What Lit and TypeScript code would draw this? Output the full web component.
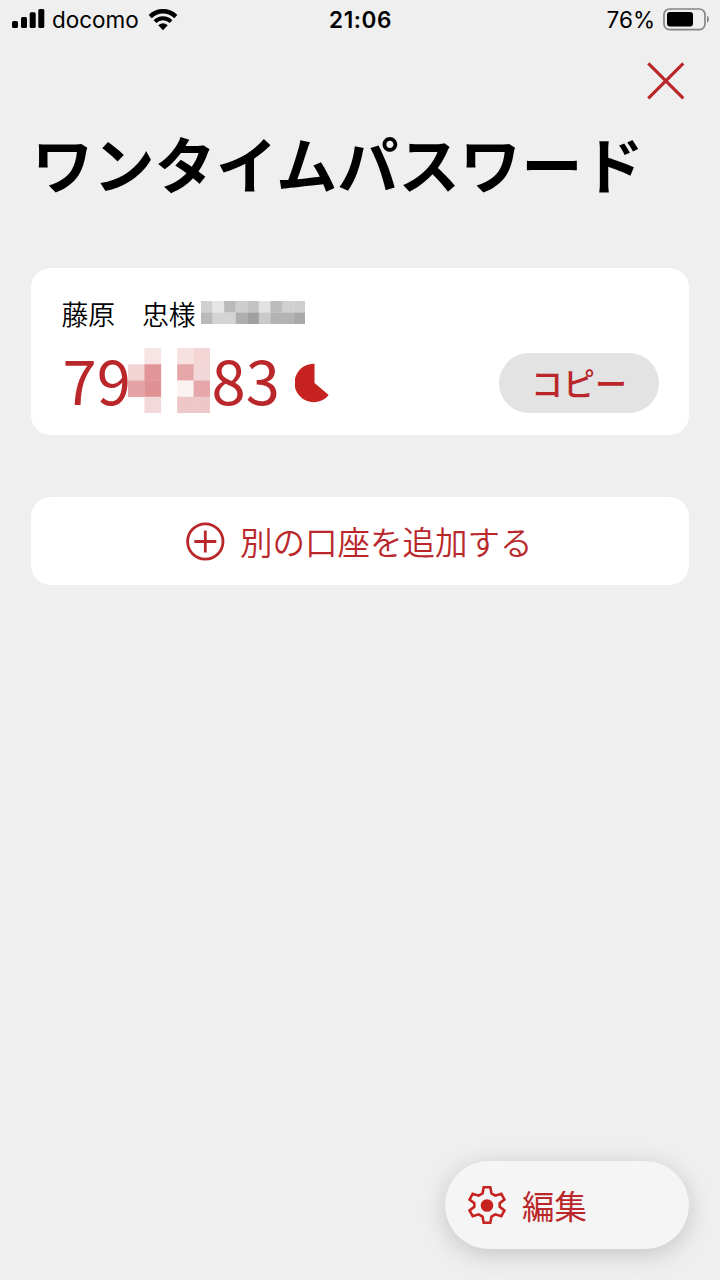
import { LitElement, html, svg, css } from "lit";
import { customElement } from "lit/decorators.js";

const NAME_MASK = [
  ["#d0d0d0", "#e6e6e6", "#bababa", "#cecece", "#c3c3c3", "#e2e2e2", "#bcbcbc", "#cfcfcf", "#cfcfcf"],
  ["#b9b9b9", "#d4d4d4", "#d4d4d4", "#aeaeae", "#a0a0a0", "#cacaca", "#b3b3b3", "#b3b3b3", "#a9a9a9"],
];

const CODE_MASK = [
  ["", "#f7e4e4", "", "#f7e0e0", "#f3d5d6"],
  ["#f3d4d5", "#e29598", "", "#e5a6a8", "#f3d6d7"],
  ["#e4a3a5", "#df9194", "", "#fbf3f1", "#e5a7a9"],
  ["", "#f4d9da", "", "#eec8c9", "#eec8c9"],
];

const cells = (rows: string[][]) =>
  rows.map((row, y) =>
    row.map((fill, x) =>
      fill ? svg`<rect x=${x} y=${y} width="1.02" height="1.02" fill=${fill}></rect>` : null
    )
  );

@customElement("app-root")
export class AppRoot extends LitElement {
  static styles = css`
    :host {
      display: flex;
      flex-direction: column;
      box-sizing: border-box;
      width: 720px;
      height: 1280px;
      overflow: hidden;
      background: #efefef;
      color: #000;
      font-family: "Noto Sans CJK JP", sans-serif;
    }
    * { box-sizing: border-box; }
    svg { display: block; flex: none; }
    button {
      border: 0;
      margin: 0;
      padding: 0;
      background: none;
      color: #b9272b;
      font: inherit;
      white-space: nowrap;
    }
    .status {
      display: grid;
      grid-template-columns: 1fr auto 1fr;
      align-items: center;
      height: 39px;
      padding: 0 10px 0 12px;
      font: 400 22.5px/39px Inter, sans-serif;
    }
    .side { display: flex; align-items: center; }
    .right { justify-content: flex-end; }
    .carrier { margin: 0 9px 0 7px; }
    .clock { font-weight: 600; letter-spacing: 0.6px; padding-right: 1px; }
    .percent { margin-right: 8px; }
    .top { display: flex; justify-content: flex-end; height: 78px; padding: 22px 34px 0 0; }
    .top button { height: 40px; }
    h1 {
      margin: 0;
      padding-left: 32px;
      height: 151.4px;
      font-size: 61.3px;
      line-height: 92px;
      font-weight: 700;
      white-space: nowrap;
    }
    .card {
      margin: 0 31px;
      border-radius: 20px;
      background: #fff;
    }
    .account { height: 167px; padding: 26.6px 30px 0 30.5px; }
    .name { display: flex; align-items: center; height: 38px; font-size: 26.8px; font-weight: 350; white-space: nowrap; }
    .name svg { margin: 0 0 2px 6px; }
    .code { display: flex; align-items: center; height: 68px; margin-top: 16px; color: #b9272b; }
    .digits { width: 67px; padding-left: 1px; font-size: 61.5px; line-height: 60px; height: 68px; font-weight: 400; white-space: nowrap; }
    .code-mask { margin: 0 1px 4px -1px; }
    .copy {
      width: 160px;
      height: 60px;
      margin-left: auto;
      border-radius: 30px;
      background: #e3e3e3;
      padding-bottom: 2px;
      font-size: 32px;
      line-height: 56px;
      font-weight: 500;
    }
    .timer { margin-left: 17px; }
    .add {
      display: flex;
      align-items: center;
      height: 88px;
      margin-top: 61.6px;
      padding-left: 154px;
      font-size: 32.5px;
      line-height: 46px;
      font-weight: 350;
    }
    .add svg { margin-right: 15px; }
    .edit {
      display: flex;
      align-items: center;
      align-self: flex-end;
      width: 244px;
      height: 88px;
      margin: auto 31px 31px 0;
      padding-left: 23px;
      border-radius: 44px;
      background: #f5f5f5;
      box-shadow: 0 5px 24px rgba(0, 0, 0, 0.18);
      font-size: 32.4px;
    }
    .edit svg { margin-right: 16px; }
    .edit span { padding-bottom: 2px; }
  `;

  render() {
    return html`
      <div class="status">
        <div class="side">
          <svg width="33" height="21" viewBox="0 0 33 21">
            <rect x="0" y="12" width="6" height="7" rx="1.5"></rect>
            <rect x="9" y="8" width="6" height="11" rx="1.5"></rect>
            <rect x="17.7" y="3.3" width="6" height="15.7" rx="1.5"></rect>
            <rect x="26.3" y="0" width="6" height="19" rx="1.5"></rect>
          </svg>
          <span class="carrier">docomo</span>
          <svg width="30" height="22" viewBox="0 0 30 22" fill="none" stroke="#000">
            <path d="M2.2 7.6 A18 18 0 0 1 27.8 7.6" stroke-width="4.4"></path>
            <path d="M7 12.7 A11.2 11.2 0 0 1 23 12.7" stroke-width="4"></path>
            <path d="M10.2 16.2 Q15 12.2 19.8 16.2 L15 21.2 Z" fill="#000" stroke="none"></path>
          </svg>
        </div>
        <span class="clock">21:06</span>
        <div class="side right">
          <span class="percent">76%</span>
          <svg width="47" height="23" viewBox="0 0 47 23">
            <rect x="1" y="1" width="41" height="20.6" rx="5.5" fill="none" stroke="#858585" stroke-width="1.7"></rect>
            <rect x="4" y="4" width="26" height="14.6" rx="3"></rect>
            <path d="M44 7.5 Q46 9 46 11.3 T44 15Z" fill="#858585"></path>
          </svg>
        </div>
      </div>
      <div class="top">
        <button aria-label="閉じる">
          <svg width="40" height="40" viewBox="0 0 40 40" stroke="#b9272b" stroke-width="3.2">
            <path d="M2.3 2.3 L37.3 37.3 M37.3 2.3 L2.3 37.3"></path>
          </svg>
        </button>
      </div>
      <h1>ワンタイムパスワード</h1>
      <section class="card account">
        <div class="name">
          藤原　忠様<svg width="104" height="23" viewBox="0 0 9 2" preserveAspectRatio="none">${cells(NAME_MASK)}</svg>
        </div>
        <div class="code">
          <span class="digits">79</span>
          <svg class="code-mask" width="82" height="65" viewBox="0 0 5 4" preserveAspectRatio="none">${cells(CODE_MASK)}</svg>
          <span class="digits">83</span>
          <svg class="timer" width="36" height="40" viewBox="0 0 36 40">
            <path d="M19.5 20 L19.5 0.8 A19.2 19.2 0 1 0 33.7 32 Z" fill="#c6221f"></path>
          </svg>
          <button class="copy">コピー</button>
        </div>
      </section>
      <button class="card add">
        <svg width="40" height="40" viewBox="0 0 40 40" fill="none" stroke="#b9272b" stroke-width="2.8">
          <circle cx="20.3" cy="20.5" r="17.7"></circle>
          <path d="M20.3 9.5 V31.5 M9.3 20.5 H31.3"></path>
        </svg>
        <span>別の口座を追加する</span>
      </button>
      <button class="edit">
        <svg width="38" height="40" viewBox="0 0 38 40">
          <path d="M15.7 2.3 H22.3 L23.5 8.5 L27.3 10.7 L33.3 8.8 L36.4 14.5 L31.7 18.2 V21.8 L36.4 25.5 L33.3 31.2 L27.3 29.3 L23.5 31.5 L22.3 37.7 H15.7 L14.5 31.5 L10.7 29.3 L4.7 31.2 L1.6 25.5 L6.3 21.8 V18.2 L1.6 14.5 L4.7 8.8 L10.7 10.7 L14.5 8.5 Z" fill="none" stroke="#c6221f" stroke-width="2.6"></path>
          <circle cx="19" cy="20.5" r="6.3" fill="#c6221f"></circle>
        </svg>
        <span>編集</span>
      </button>
    `;
  }
}
